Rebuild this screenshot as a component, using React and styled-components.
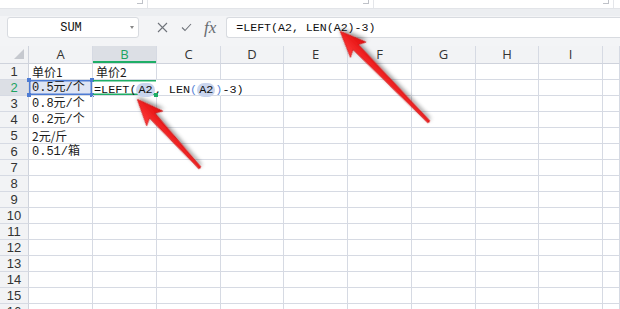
import React from 'react'
import styled, { createGlobalStyle, css } from 'styled-components'

const GlobalStyle = createGlobalStyle`
  html, body {
    margin: 0;
    padding: 0;
    background: #fff;
  }
  body {
    overflow: hidden;
    font-family: "Noto Sans CJK SC", sans-serif;
  }
`

const Screen = styled.div`
  position: relative;
  width: 620px;
  height: 309px;
  overflow: hidden;
  background: #fff;
`

const RibbonEdge = styled.div`
  display: flex;
  height: 8px;
  background: #fff;
`

const RibbonGroup = styled.div`
  display: flex;
  justify-content: flex-end;
  align-items: flex-start;
  width: ${p => p.$width}px;
  padding-right: 4px;
  box-sizing: border-box;
  border-right: 1px solid #e4e6ea;
`

const Launcher = styled.span`
  width: 5px;
  height: 3px;
  border-right: 1px solid #bfc2c8;
  border-bottom: 1px solid #bfc2c8;
`

const Band = styled.div`
  height: 8px;
  background: #eceef1;
  border-top: 1px solid #e2e4e8;
  box-sizing: border-box;
`

const FormulaBar = styled.div`
  display: flex;
  align-items: flex-start;
  height: 30px;
  padding: 1px 0 0 7px;
  box-sizing: border-box;
  background: #f3f4f6;
`

const NameBox = styled.div`
  display: flex;
  align-items: center;
  width: 132px;
  height: 21px;
  box-sizing: border-box;
  background: #fff;
  border: 1px solid #d8dbe0;
  border-radius: 3px;
`

const NameText = styled.span`
  flex: 1;
  text-align: center;
  padding-left: 4px;
  font-family: "Liberation Mono", monospace;
  font-size: 12px;
  color: #111;
`

const Caret = styled.span`
  width: 0;
  height: 0;
  margin-right: 4px;
  border-left: 2.5px solid transparent;
  border-right: 2.5px solid transparent;
  border-top: 3px solid #888;
`

const Tools = styled.div`
  display: flex;
  align-items: center;
  gap: 13px;
  height: 21px;
  margin: 0 10px 0 18px;
  color: #6f737a;
`

const Fx = styled.span`
  font-family: "Liberation Serif", serif;
  font-style: italic;
  font-size: 17px;
  line-height: 1;
  color: #666a70;
  margin-left: -1px;
`

const FormulaInput = styled.div`
  flex: 1;
  height: 21px;
  box-sizing: border-box;
  padding-left: 9px;
  background: #fff;
  border: 1px solid #d8dbe0;
  border-right: none;
  border-radius: 3px 0 0 3px;
  font-family: "Liberation Mono", monospace;
  font-size: 11.6px;
  line-height: 19px;
  color: #111;
  white-space: nowrap;
`

const Sheet = styled.div`
  display: grid;
  grid-template-columns: 29px 64px 64px 64px 63px 64px 64px 64px 63px 64px 1fr;
  grid-template-rows: 18px;
  grid-auto-rows: 16px;
`

const headBase = css`
  box-sizing: border-box;
  display: flex;
  align-items: center;
  justify-content: center;
  background: #f2f3f5;
  color: #333;
`

const Corner = styled.div`
  ${headBase};
  justify-content: flex-end;
  align-items: flex-end;
  padding: 0 4px 4px 0;
  border-right: 1px solid #cfd3dc;
  border-bottom: 1px solid #cfd3dc;
  &::after {
    content: '';
    width: 0;
    height: 0;
    border-left: 10px solid transparent;
    border-bottom: 10px solid #c6c9cf;
  }
`

const ColHead = styled.div`
  ${headBase};
  font-family: "Open Sans", "Liberation Sans", sans-serif;
  font-size: 13px;
  line-height: 17px;
  border-right: 1px solid #d6dae3;
  border-bottom: 1px solid #cfd3dc;
  ${p => p.$active && css`
    background: #dcdfe5;
    color: #1ea362;
    box-shadow: inset 0 -2px 0 #1fae66;
  `}
`

const RowHead = styled.div`
  ${headBase};
  font-family: "Liberation Sans", sans-serif;
  font-size: 13px;
  line-height: 15px;
  border-right: 1px solid #cfd3dc;
  border-bottom: 1px solid #d6dae3;
  ${p => p.$active && css`
    background: #dcdfe5;
    color: #1ea362;
  `}
`

const Cell = styled.div`
  position: relative;
  box-sizing: border-box;
  padding-left: 3px;
  border-right: 1px solid ${p => (p.$noRight ? 'transparent' : '#d6dae3')};
  border-bottom: 1px solid #d6dae3;
  font-family: ${p => (p.$mono
    ? '"Liberation Mono", "Noto Sans CJK SC", monospace'
    : '"Noto Sans CJK SC", sans-serif')};
  font-size: 12px;
  line-height: 16px;
  color: #1a1a1a;
  white-space: nowrap;
  ${p => p.$selected && css`
    background: #dfe5f4;
    box-shadow: inset 0 0 0 1.5px #4d7bd3;
  `}
  ${p => p.$editing && css`
    z-index: 2;
    overflow: visible;
    padding-left: 1px;
    box-shadow: inset 0 1.5px 0 #1fae66, inset 0 -1.5px 0 #1fae66;
  `}
`

const Handle = styled.span`
  position: absolute;
  width: 4px;
  height: 4px;
  background: ${p => p.$color};
  ${p => (p.$top ? 'top: -2px;' : 'bottom: -2px;')}
  ${p => (p.$left ? 'left: -2px;' : 'right: -2px;')}
`

const Formula = styled.span`
  font-family: "Liberation Mono", monospace;
  font-size: 11.8px;
  color: #111;
`

const Ref = styled.span`
  display: inline-block;
  line-height: 14px;
  padding: 0 2px;
  border-radius: 7px;
  background: #c9d5ee;
`

const Paren = styled.span`
  color: ${p => (p.$blue ? '#5a86d8' : 'inherit')};
`

const Overlay = styled.svg`
  position: absolute;
  inset: 0;
  pointer-events: none;
`

const columns = ['A', 'B', 'C', 'D', 'E', 'F', 'G', 'H', 'I', '']

const values = {
  A1: { text: '单价1' },
  B1: { text: '单价2' },
  A2: { text: '0.5元/个', mono: true },
  A3: { text: '0.8元/个', mono: true },
  A4: { text: '0.2元/个', mono: true },
  A5: { text: '2元/斤' },
  A6: { text: '0.51/箱', mono: true },
}

const CloseIcon = () => (
  <svg width="11" height="11" viewBox="0 0 11 11">
    <path d="M1 1 L10 10 M10 1 L1 10" stroke="#6f737a" strokeWidth="1.1" fill="none" />
  </svg>
)

const CheckIcon = () => (
  <svg width="11" height="9" viewBox="0 0 11 9">
    <path d="M1 4.5 L4 7.5 L10 1" stroke="#6f737a" strokeWidth="1.1" fill="none" />
  </svg>
)

const Arrow = ({ x, y, angle, length }) => {
  const L = length
  const pts = [
    [0, -1.2], [L - 22, -3.6], [L - 26, -11], [L, 0],
    [L - 26, 11], [L - 22, 3.6], [0, 1.2],
  ].map(p => p.join(',')).join(' ')
  return (
    <g transform={`translate(${x} ${y}) rotate(${angle})`} filter="url(#arrowShadow)">
      <polygon points={pts} fill="url(#arrowFill)" stroke="#c80000" strokeWidth="0.6" />
    </g>
  )
}

const handles = [
  { top: true, left: true }, { top: true, left: false },
  { top: false, left: true }, { top: false, left: false },
]

const renderCell = (col, row) => {
  const id = col + row
  if (id === 'B2') {
    return (
      <Cell key={id} $editing $noRight>
        <Formula>
          =LEFT(<Ref>A2</Ref>, LEN<Paren $blue>(</Paren><Ref>A2</Ref><Paren $blue>)</Paren>-3)
        </Formula>
        <Handle $color="#1fae66" $top={false} $left={false} />
      </Cell>
    )
  }
  const value = values[id]
  return (
    <Cell key={id} $mono={value && value.mono} $selected={id === 'A2'} $noRight={id === 'C2'}>
      {value && value.text}
      {id === 'A2' && handles.map((h, i) => (
        <Handle key={i} $color="#4d7bd3" $top={h.top} $left={h.left} />
      ))}
    </Cell>
  )
}

export default function App() {
  const rows = Array.from({ length: 16 }, (_, i) => i + 1)

  return (
    <Screen>
      <GlobalStyle />
      <RibbonEdge>
        <RibbonGroup $width={148}><Launcher /></RibbonGroup>
        <RibbonGroup $width={226}><Launcher /></RibbonGroup>
        <RibbonGroup $width={240}><Launcher /></RibbonGroup>
      </RibbonEdge>
      <Band />
      <FormulaBar>
        <NameBox>
          <NameText>SUM</NameText>
          <Caret />
        </NameBox>
        <Tools>
          <CloseIcon />
          <CheckIcon />
          <Fx>fx</Fx>
        </Tools>
        <FormulaInput>=LEFT(A2, LEN(A2)-3)</FormulaInput>
      </FormulaBar>

      <Sheet>
        <Corner />
        {columns.map(c => (
          <ColHead key={c || 'rest'} $active={c === 'B'}>{c}</ColHead>
        ))}
        {rows.map(r => (
          <React.Fragment key={r}>
            <RowHead $active={r === 2}>{r}</RowHead>
            {columns.map(c => renderCell(c || 'J', r))}
          </React.Fragment>
        ))}
      </Sheet>

      <Overlay width="620" height="309">
        <defs>
          <linearGradient id="arrowFill" x1="0" y1="0" x2="0" y2="1">
            <stop offset="0" stopColor="#ff3b3b" />
            <stop offset="1" stopColor="#e00a0a" />
          </linearGradient>
          <filter id="arrowShadow" x="-30%" y="-30%" width="160%" height="160%">
            <feDropShadow dx="1.5" dy="2" stdDeviation="2" floodColor="#000" floodOpacity="0.45" />
          </filter>
        </defs>
        <Arrow x={429} y={122} angle={225.6} length={127} />
        <Arrow x={200} y={168} angle={227.6} length={93} />
      </Overlay>
    </Screen>
  )
}
